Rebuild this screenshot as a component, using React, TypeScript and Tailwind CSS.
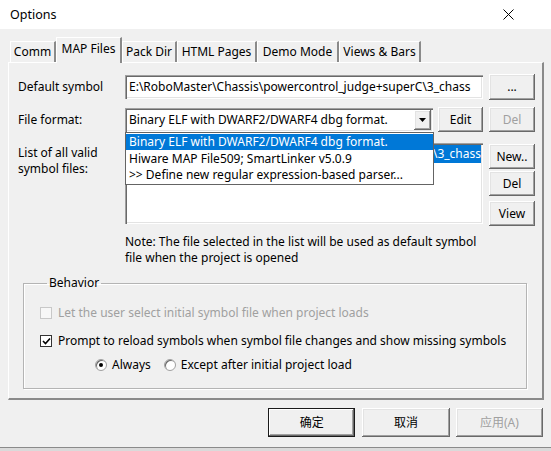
import React from 'react';

const raised =
  'bg-[#f0f0f0] shadow-[inset_-1px_-1px_0_#696969,inset_1px_1px_0_#ffffff,inset_-2px_-2px_0_#a0a0a0,inset_2px_2px_0_#e3e3e3]';
const sunken =
  'bg-white shadow-[inset_1px_1px_0_#a0a0a0,inset_2px_2px_0_#696969,inset_-1px_-1px_0_#ffffff,inset_-2px_-2px_0_#e3e3e3]';

const Btn = ({ label, disabled, className }: { label: string; disabled?: boolean; className?: string }) => (
  <div
    className={`flex items-center justify-center ${raised} ${disabled ? 'text-[#a0a0a0]' : 'text-black'} ${className ?? ''}`}
  >
    {label}
  </div>
);

const Tab = ({ label, width, active }: { label: string; width: string; active?: boolean }) => (
  <div
    className={`flex items-center justify-center border-t border-l border-t-white border-l-white border-r-2 border-r-[#8a8a8a] ${width} ${
      active ? 'h-[26px] -mb-px relative z-10 bg-[#f0f0f0] pb-[3px]' : 'h-[21px] bg-[#f0f0f0]'
    }`}
  >
    {label}
  </div>
);

const CheckRow = ({ label, checked, disabled }: { label: string; checked?: boolean; disabled?: boolean }) => (
  <div className="flex items-center gap-[6px] h-[16px]">
    <div
      className={`w-[12px] h-[12px] flex items-center justify-center border ${
        disabled ? 'border-[#c8c8c8] bg-[#f7f7f7]' : 'border-[#333333] bg-white'
      }`}
    >
      {checked && (
        <svg width="9" height="9" viewBox="0 0 9 9">
          <path d="M1 4 L3.5 6.5 L8 1.5" stroke="#000" strokeWidth="1.6" fill="none" />
        </svg>
      )}
    </div>
    <span className={disabled ? 'text-[#a0a0a0]' : 'text-black'}>{label}</span>
  </div>
);

const Radio = ({ label, checked }: { label: string; checked?: boolean }) => (
  <div className="flex items-center gap-[5px]">
    <div className="w-[12px] h-[12px] rounded-full border border-[#a0a0a0] bg-white shadow-[inset_1px_1px_0_#696969] flex items-center justify-center">
      {checked && <div className="w-[4px] h-[4px] rounded-full bg-black" />}
    </div>
    <span>{label}</span>
  </div>
);

export default function App() {
  return (
    <div className="w-[551px] h-[451px] bg-[#f0f0f0] flex flex-col overflow-hidden text-[12px] leading-[16px] text-black font-['Noto_Sans','Noto_Sans_CJK_SC',sans-serif]">
      {/* title bar */}
      <div className="h-[29px] bg-white flex items-center justify-between pl-[10px] pr-[37px] shrink-0">
        <span className="text-[12.5px]">Options</span>
        <svg width="11" height="11" viewBox="0 0 11 11">
          <path d="M0.5 0.5 L10.5 10.5 M10.5 0.5 L0.5 10.5" stroke="#000" strokeWidth="1" />
        </svg>
      </div>

      <div className="flex-1 flex flex-col px-[8px] pt-[8px]">
        {/* tabs */}
        <div className="flex items-end pl-[2px] h-[25px]">
          <Tab label="Comm" width="w-[46px]" />
          <Tab label="MAP Files" width="w-[66px]" active />
          <Tab label="Pack Dir" width="w-[55px]" />
          <Tab label="HTML Pages" width="w-[80px]" />
          <Tab label="Demo Mode" width="w-[82px]" />
          <Tab label="Views & Bars" width="w-[82px]" />
        </div>

        {/* panel */}
        <div className="w-[536px] h-[338px] border-t border-l border-t-white border-l-white border-r-2 border-b-2 border-r-[#8a8a8a] border-b-[#8a8a8a] pl-[9px] pt-[11px]">
          <div className="flex items-center h-[26px]">
            <div className="w-[107px]">Default symbol</div>
            <div className={`w-[358px] h-[24px] ${sunken} flex items-center pl-[4px] overflow-hidden whitespace-nowrap`}>
              E:\RoboMaster\Chassis\powercontrol_judge+superC\3_chass
            </div>
            <Btn label="..." className="w-[46px] h-[26px] ml-[6px]" />
          </div>

          <div className="flex items-center h-[25px] mt-[7px]">
            <div className="w-[107px]">File format:</div>
            <div className={`relative w-[308px] h-[24px] ${sunken} flex items-center pl-[4px] pr-[2px]`}>
              <span className="flex-1 whitespace-nowrap overflow-hidden">Binary ELF with DWARF2/DWARF4 dbg format.</span>
              <div className={`w-[17px] h-[20px] ${raised} flex items-center justify-center`}>
                <svg width="7" height="4" viewBox="0 0 7 4">
                  <path d="M0 0 H7 L3.5 4 Z" fill="#000" />
                </svg>
              </div>
              {/* open dropdown */}
              <div className="absolute left-0 top-[24px] w-[309px] h-[53px] bg-white border border-[#646464] z-20 flex flex-col pt-px">
                <div className="h-[17px] bg-[#0078d7] text-white pl-[3px] flex items-center whitespace-nowrap">
                  Binary ELF with DWARF2/DWARF4 dbg format.
                </div>
                <div className="h-[17px] pl-[3px] flex items-center whitespace-nowrap">Hiware MAP File509; SmartLinker v5.0.9</div>
                <div className="h-[17px] pl-[3px] flex items-center whitespace-nowrap">
                  &gt;&gt; Define new regular expression-based parser...
                </div>
              </div>
            </div>
            <Btn label="Edit" className="w-[45px] h-[25px] ml-[5px]" />
            <Btn label="Del" disabled className="w-[46px] h-[25px] ml-[6px]" />
          </div>

          <div className="flex mt-[11px]">
            <div className="w-[107px] pt-[2px]">
              List of all valid
              <br />
              symbol files:
            </div>
            <div className={`w-[358px] h-[81px] ${sunken} pt-[2px] pl-[2px] pr-[2px] overflow-hidden`}>
              <div className="h-[18px] bg-[#0078d7] text-white flex items-center justify-end whitespace-nowrap overflow-hidden">
                E:\RoboMaster\Chassis\powercontrol_judge+superC\3_chass
              </div>
            </div>
            <div className="flex flex-col ml-[6px] pt-px">
              <Btn label="New.." className="w-[46px] h-[25px]" />
              <Btn label="Del" className="w-[46px] h-[25px] mt-[2px]" />
              <Btn label="View" className="w-[46px] h-[25px] mt-[5px]" />
            </div>
          </div>

          <div className="ml-[107px] mt-[8px]">
            Note: The file selected in the list will be used as default symbol
            <br />
            file when the project is opened
          </div>

          <fieldset className="ml-[5px] mt-[9px] w-[504px] h-[114px] border border-[#b4b4b4] shadow-[1px_1px_0_#ffffff,inset_1px_1px_0_#ffffff] pl-[16px] pt-[14px]">
            <legend className="ml-[7px] px-[2px]">Behavior</legend>
            <CheckRow label="Let the user select initial symbol file when project loads" disabled />
            <div className="mt-[12px]">
              <CheckRow label="Prompt to reload symbols when symbol file changes and show missing symbols" checked />
            </div>
            <div className="flex items-center gap-[13px] ml-[55px] mt-[8px]">
              <Radio label="Always" checked />
              <Radio label="Except after initial project load" />
            </div>
          </fieldset>
        </div>

        {/* bottom buttons */}
        <div className="flex pl-[260px] mt-[8px]">
          <div className="w-[88px] h-[29px] flex items-center justify-center bg-[#f0f0f0] border border-[#1a1a1a] shadow-[inset_-1px_-1px_0_#696969,inset_1px_1px_0_#ffffff,inset_-2px_-2px_0_#a0a0a0]">
            确定
          </div>
          <Btn label="取消" className="w-[88px] h-[29px] ml-[7px]" />
          <Btn label="应用(A)" disabled className="w-[88px] h-[29px] ml-[6px]" />
        </div>
      </div>

      <div className="h-[4px] shrink-0 border-t border-[#8a8a8a] bg-[#dadada]" />
    </div>
  );
}
